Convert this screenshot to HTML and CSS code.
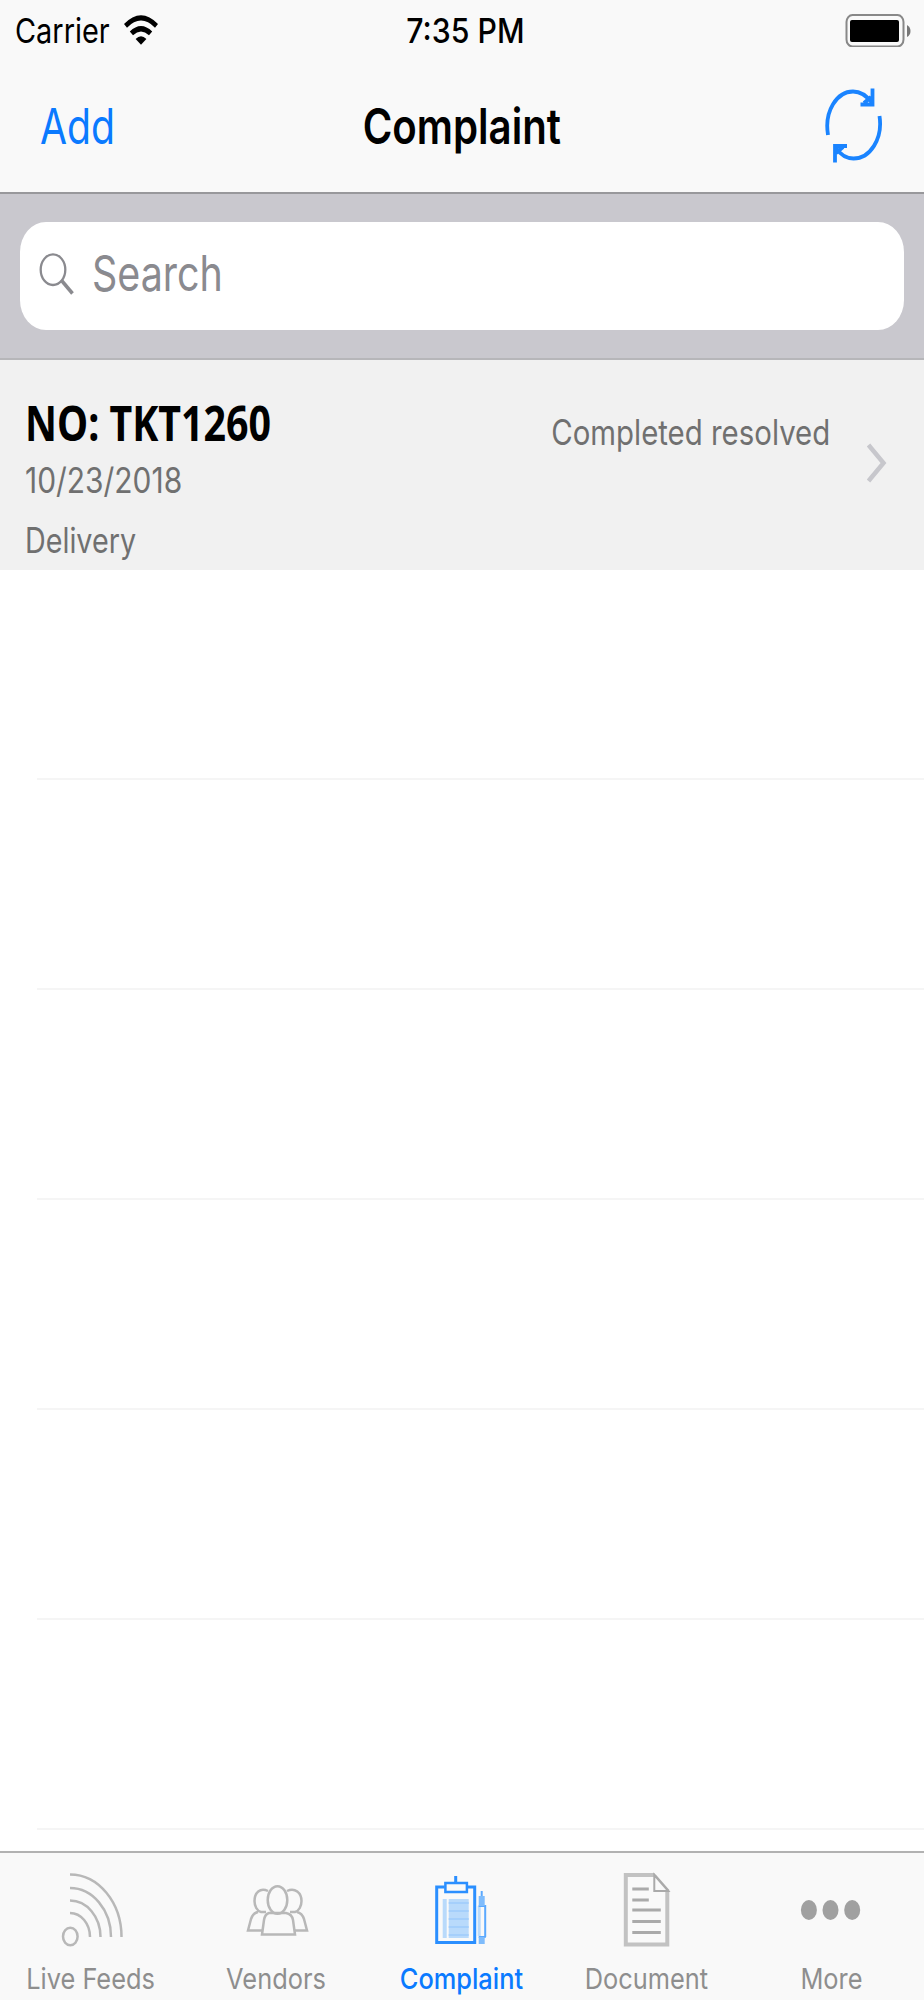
FILE: index.html
```html
<!DOCTYPE html>
<html lang="en">
<head>
  <meta charset="UTF-8" />
  <meta name="viewport" content="width=device-width, initial-scale=1.0" />
  <title>Complaint</title>
  <link rel="stylesheet" href="styles.css">
</head>
<body>
  <header>
    <div class="status">
      <div class="carrier">
        <span class="text">Carrier</span>
        <svg class="wifi" width="34" height="30" viewBox="125 15 34 30">
          <path d="M125 24Q142 6.5 159 24L156 27.7Q142 13.5 128 27.7Z" />
          <path d="M130.8 31.5Q142 20.5 153.2 31.5L150 35.2Q142 28 134 35.2Z" />
          <path d="M136.6 39Q142 33.5 147.4 39L142 44.7Z" />
        </svg>
      </div>
      <span class="text time">7:35 PM</span>
      <svg class="battery" width="66" height="34" viewBox="845 13 66 34">
        <rect x="846.5" y="15" width="57" height="31.5" rx="6" ry="7" fill="none" stroke="#888" stroke-width="2" />
        <rect x="850" y="20" width="49" height="22" rx="2" />
        <path d="M907 25Q910.5 27 910.5 31T907 37Z" fill="#777" />
      </svg>
    </div>
    <nav>
      <a class="text add">Add</a>
      <h1 class="text title">Complaint</h1>
      <svg class="refresh" width="58" height="76" viewBox="825 87 58 76">
        <path d="M828 134C824 110 837 90.5 853 90.5C861 90.5 867 95 872 102" />
        <path d="M872.5 87.5V103.5H860.5M864 102L871 96" />
        <path d="M879.5 115C883 138 870 157.5 853.5 157.5C845 157.5 840 153 836 147" />
        <path d="M835 161.5V145H847M836 152L843 146" />
      </svg>
    </nav>
  </header>

  <div class="search">
    <div class="field">
      <svg width="36" height="44" viewBox="39 252 36 44">
        <ellipse cx="53" cy="269.7" rx="12.3" ry="15.3" stroke-width="2.3" />
        <path d="M62 281L72.5 293.5" stroke-width="3.5" />
      </svg>
      <span class="text">Search</span>
    </div>
  </div>

  <main>
    <div class="row ticket">
      <div class="info">
        <h2 class="text">NO: TKT1260</h2>
        <p class="text date">10/23/2018</p>
        <p class="text type">Delivery</p>
      </div>
      <span class="text state">Completed resolved</span>
      <svg class="chevron" width="20" height="40" viewBox="868 443.5 20 40">
        <path d="M869.5 445.5L884.5 463.5L869.5 481.5" />
      </svg>
    </div>
    <div class="row"></div>
    <div class="row"></div>
    <div class="row"></div>
    <div class="row"></div>
    <div class="row"></div>
    <div class="row"></div>
  </main>

  <footer>
    <a class="tab feeds">
      <svg width="185" height="90" viewBox="0 1865 185 90">
        <ellipse cx="70.3" cy="1936.5" rx="7.3" ry="8.8" />
        <path d="M70 1913A20 24 0 0 1 90 1937M70 1900.5A30.5 36.5 0 0 1 100.5 1937M70 1888A41 49 0 0 1 111 1937M70 1874.5A51.5 62.5 0 0 1 121.5 1937" />
      </svg>
      <span class="text">Live Feeds</span>
    </a>
    <a class="tab vendors">
      <svg width="185" height="90" viewBox="185 1865 185 90">
        <ellipse cx="277.5" cy="1900" rx="9.8" ry="13.8" />
        <path d="M269 1913Q265 1914 264 1920L262 1934.5H295L293 1920Q292 1914 286 1913Z" />
        <path d="M268 1891C260 1887 254.5 1893 254.5 1901C254.5 1906 257 1911 261 1912H266M258 1912Q253 1913 251 1919L248 1930.5H262" />
        <path d="M287 1891C295 1887 301.5 1893 301.5 1901C301.5 1906 299 1911 295 1912H290M297 1912Q302 1913 304 1919L307 1930.5H294" />
      </svg>
      <span class="text">Vendors</span>
    </a>
    <a class="tab complaint active">
      <svg width="185" height="90" viewBox="370.3 1865 185 90">
        <path d="M445 1887H437V1942.5H475V1887H467" stroke-width="3" />
        <rect x="445.7" y="1883" width="21.5" height="9" />
        <path d="M456 1876V1882" stroke-width="3" />
        <path d="M443 1899H447V1938H443ZM449 1899H469V1938H449Z" fill="#b9dafb" stroke="none" />
        <path d="M449 1903H469M449 1911H469M449 1919H469M449 1927H469M449 1935H469" stroke="#a5cffb" stroke-width="2" />
        <path d="M478 1906H481V1936H478Z" fill="#b9dafb" stroke="none" />
        <path d="M482 1891V1897M485.5 1905V1937M479 1906H486M479 1937H486" stroke="#5aa9ff" stroke-width="2" />
        <path d="M482 1896V1906M482 1937V1944" stroke="#7fbcfc" stroke-width="6" />
      </svg>
      <span class="text">Complaint</span>
    </a>
    <a class="tab document">
      <svg width="185" height="90" viewBox="555.2 1865 185 90">
        <path d="M655 1875H626V1944.5H667.5V1891" stroke="#c2c2c2" stroke-width="4" />
        <path d="M654.5 1875V1891H668.5ZM655 1875L669 1891" stroke="#aaa" stroke-width="2" />
        <path d="M632.5 1889H649M632.5 1900H649M632.5 1910H661M632.5 1921.5H661M632.5 1932.5H661" stroke="#aaa" stroke-width="3" />
      </svg>
      <span class="text">Document</span>
    </a>
    <a class="tab more">
      <svg width="185" height="90" viewBox="739.8 1865 185 90">
        <ellipse cx="808.7" cy="1910" rx="8" ry="10" />
        <ellipse cx="830.3" cy="1910" rx="8" ry="10" />
        <ellipse cx="852" cy="1910" rx="8" ry="10" />
      </svg>
      <span class="text">More</span>
    </a>
  </footer>
</body>
</html>
```
FILE: styles.css
```css
* {
  box-sizing: border-box;
}
body {
  margin: 0;
  height: 2000px;
  display: flex;
  flex-direction: column;
  overflow: hidden;
  background: #fff;
  font-family: Inter, "Liberation Sans", sans-serif;
  color: #000;
}
h1, h2, p {
  margin: 0;
}
svg {
  display: block;
  flex: none;
}
/* tall, narrow lettering */
.text {
  display: block;
  white-space: nowrap;
  transform: scaleX(0.82);
  transform-origin: left center;
}
header {
  height: 194px;
  flex: none;
  background: #f9f9f9;
  border-bottom: 2px solid #98989b;
}
.status {
  height: 60px;
  display: grid;
  grid-template-columns: 1fr auto 1fr;
  align-items: center;
  padding: 0 13px 0 15px;
  font-size: 34px;
}
.carrier {
  display: flex;
  align-items: center;
}
.carrier .text {
  margin-right: -2px;
  transform: scaleX(0.85);
}
.status .time {
  margin: 1px 0 0 5px;
  font-weight: 500;
  transform: scaleX(0.89);
  transform-origin: center;
}
.battery {
  justify-self: end;
}
nav {
  height: 131px;
  display: grid;
  grid-template-columns: 1fr auto 1fr;
  align-items: center;
  padding: 0 41px 0 40px;
  font-size: 49px;
}
.add {
  padding-top: 1px;
  color: #0a7aff;
  transform: scaleX(0.8);
}
.title {
  padding-top: 1px;
  font-size: 49px;
  font-weight: 600;
  transform-origin: center;
}
.refresh {
  justify-self: end;
  fill: none;
  stroke: #1a84ff;
  stroke-width: 3.8;
}
.search {
  height: 166px;
  flex: none;
  padding: 28px 20px;
  background: #c9c8ce;
  border-bottom: 2px solid #b6b6b9;
}
.field {
  height: 108px;
  display: flex;
  align-items: center;
  padding: 0 0 4px 19px;
  gap: 17px;
  border-radius: 26px / 30px;
  background: #fff;
  color: #8a8a8f;
  font-size: 49px;
}
.field .text {
  margin-bottom: 2px;
  transform: scaleX(0.805);
}
.field svg {
  fill: none;
  stroke: #8a8a8f;
}
main {
  flex: 1;
  overflow: hidden;
}
.row {
  height: 210px;
  margin-left: 37px;
  border-bottom: 2px solid #f5f5f5;
}
.ticket {
  display: flex;
  margin: 0;
  padding: 33px 37px 0 25px;
  border: none;
  background: #f1f1f1;
  color: #707070;
  font-size: 35px;
}
.info {
  flex: 1;
}
h2 {
  color: #000;
  font: bold 48px/60px "Noto Sans", sans-serif;
}
.info p {
  margin-top: 6px;
  line-height: 42px;
}
.info .date {
  transform: scaleX(0.855);
}
.info .type {
  margin-top: 18px;
}
.state {
  margin-top: 18px;
  transform: scaleX(0.84);
  transform-origin: right center;
}
.chevron {
  margin: 50px 0 0 37px;
  fill: none;
  stroke: #c7c7cc;
  stroke-width: 4.5;
}
footer {
  height: 149px;
  flex: none;
  display: flex;
  background: #f9f9f9;
  border-top: 2px solid #b2b2b2;
}
.tab {
  flex: 1;
  display: flex;
  flex-direction: column;
  align-items: center;
  padding-top: 12px;
  color: #8e8e8e;
  font-size: 29px;
}
.tab svg {
  fill: none;
  stroke: #b8b8b8;
  stroke-width: 2.5;
}
.tab .text {
  margin: 6px 3px 0 0;
  transform: scaleX(0.875);
  transform-origin: center;
}
.tab.active {
  color: #0a7aff;
  font-weight: 500;
}
.active svg {
  stroke: #2b8fff;
}
.more svg {
  fill: #a0a0a0;
  stroke: none;
}
```
